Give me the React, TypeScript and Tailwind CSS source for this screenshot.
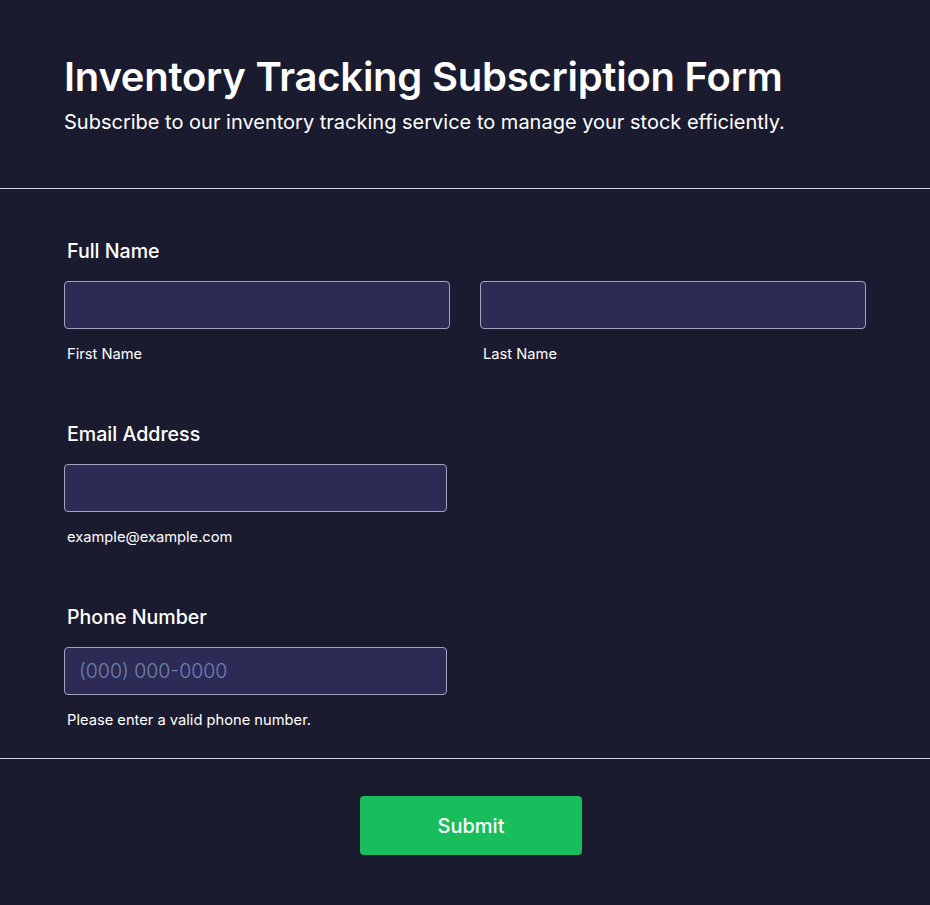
export default function App() {
  return (
    <div className="min-h-screen bg-[#1b1b2f] text-white" style={{ fontFamily: 'Inter, "Noto Sans", sans-serif' }}>
      <header className="border-b border-[#d4d4dc] px-16 pt-[53px] pb-[52px]">
        <h1 className="text-[40px] font-semibold leading-[48px] tracking-[-0.25px]">
          Inventory Tracking Subscription Form
        </h1>
        <p className="mt-[7px] text-[20px] leading-[28px]">
          Subscribe to our inventory tracking service to manage your stock efficiently.
        </p>
      </header>

      <main className="border-b border-[#d4d4dc] px-16 pt-12 pb-[28px]">
        <section>
          <label className="block pl-[3px] text-[19.6px] font-medium leading-[28px]">Full Name</label>
          <div className="mt-4 grid w-[802px] grid-cols-2 gap-[30px]">
            <div>
              <input className="h-12 w-full rounded border border-[#a4a3bd] bg-[#2d2b55] px-3.5 text-[20px] outline-none" />
              <p className="mt-[15px] pl-[3px] text-[14.7px] leading-5">First Name</p>
            </div>
            <div>
              <input className="h-12 w-full rounded border border-[#a4a3bd] bg-[#2d2b55] px-3.5 text-[20px] outline-none" />
              <p className="mt-[15px] pl-[3px] text-[14.7px] leading-5">Last Name</p>
            </div>
          </div>
        </section>

        <section className="mt-14">
          <label className="block pl-[3px] text-[19.6px] font-medium leading-[28px]">Email Address</label>
          <input className="mt-4 block h-12 w-[383px] rounded border border-[#a4a3bd] bg-[#2d2b55] px-3.5 text-[20px] outline-none" />
          <p className="mt-[15px] pl-[3px] text-[14.7px] leading-5">example@example.com</p>
        </section>

        <section className="mt-14">
          <label className="block pl-[3px] text-[19.6px] font-medium leading-[28px]">Phone Number</label>
          <input
            placeholder="(000) 000-0000"
            className="mt-4 block h-12 w-[383px] rounded border border-[#a4a3bd] bg-[#2d2b55] px-3.5 text-[19.5px] font-light outline-none placeholder:text-[#7082b0]"
          />
          <p className="mt-[15px] pl-[3px] text-[14.7px] leading-5">Please enter a valid phone number.</p>
        </section>
      </main>

      <div className="flex justify-center pt-[37px] pl-3">
        <button className="h-[59px] w-[222px] rounded bg-[#19be5c] text-[20px] font-medium text-white">
          Submit
        </button>
      </div>
    </div>
  )
}
